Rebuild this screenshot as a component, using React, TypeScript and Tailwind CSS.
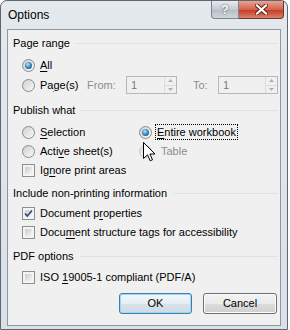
import React from "react";

function Radio({ checked = false }: { checked?: boolean }) {
  return (
    <span className="shrink-0 w-[13px] h-[13px] rounded-full border border-[#8b8b8b] bg-[linear-gradient(135deg,#cfcfcf,#f9f9f9)] flex items-center justify-center">
      {checked && (
        <span className="w-[7px] h-[7px] rounded-full bg-[radial-gradient(circle_at_40%_35%,#bfe9fb,#3d8cc4_45%,#0f4674)]" />
      )}
    </span>
  );
}

function Check({ checked = false }: { checked?: boolean }) {
  return (
    <span className="shrink-0 w-[13px] h-[13px] border border-[#8e8f8f] bg-[#f4f4f4] p-[2px] relative">
      <span className="block w-full h-full bg-[linear-gradient(135deg,#cbcbcb,#f7f7f7)]" />
      {checked && (
        <svg className="absolute left-0 top-0" width="11" height="11" viewBox="0 0 11 11">
          <path d="M2 5.5 L4.3 8 L9 2.5" fill="none" stroke="#34487f" strokeWidth="1.7" />
        </svg>
      )}
    </span>
  );
}

function Spin({ w }: { w: string }) {
  return (
    <div className={`${w} h-[18px] border border-[#b5b8bb] bg-[#f0f0f0] flex`}>
      <div className="flex-1 pl-[4px] text-[#7a7a7a] leading-[16px]">1</div>
      <div className="w-[12px] border-l border-[#dcdcdc] flex flex-col">
        <div className="flex-1 border-b border-[#dcdcdc] flex items-center justify-center">
          <svg width="5" height="3" viewBox="0 0 5 3"><path d="M0 3 L2.5 0 L5 3Z" fill="#b0b0b0" /></svg>
        </div>
        <div className="flex-1 flex items-center justify-center">
          <svg width="5" height="3" viewBox="0 0 5 3"><path d="M0 0 L2.5 3 L5 0Z" fill="#b0b0b0" /></svg>
        </div>
      </div>
    </div>
  );
}

function Header({ text, h }: { text: string; h: string }) {
  return (
    <div className={`${h} flex items-center pl-[5px] pr-[2px]`}>
      <span className="pr-[6px]">{text}</span>
      <span className="flex-1 h-px bg-[#dde2e6]" />
    </div>
  );
}

function U({ children }: { children: React.ReactNode }) {
  return <span className="underline underline-offset-2">{children}</span>;
}

export default function App() {
  return (
    <div className="w-[290px] h-[330px] bg-white font-['Liberation_Sans',Arial,sans-serif] text-[11px] text-black">
      <div className="w-[288px] h-[330px] rounded-t-[7px] border border-[#5e6670] bg-[linear-gradient(180deg,#e4e9ee,#d9e0e7)] flex flex-col">
        {/* title bar */}
        <div className="h-[28px] flex items-start">
          <div className="pl-[7px] pt-[6px] text-[12px] leading-[16px]">Options</div>
          <div className="ml-auto mr-[3px] flex">
            <div className="w-[28px] h-[18px] rounded-bl-[4px] border border-t-0 border-[#7b8590] bg-[linear-gradient(180deg,#e9ecef,#c3c9cf_50%,#b4bcc4_51%,#d0d6dc)] flex items-center justify-center text-[12px] font-bold text-white [text-shadow:0_0_2px_#333]">
              ?
            </div>
            <div className="w-[45px] h-[18px] rounded-br-[4px] border border-t-0 border-l-0 border-[#6d3530] bg-[linear-gradient(180deg,#e8a493,#d4624d_50%,#c4371f_51%,#d9826c)] flex items-center justify-center">
              <svg width="13" height="11" viewBox="0 0 13 11">
                <path d="M2 1.5 L11 9.5 M11 1.5 L2 9.5" stroke="#5b1c12" strokeWidth="4" strokeLinecap="square" />
                <path d="M2 1.5 L11 9.5 M11 1.5 L2 9.5" stroke="#ffffff" strokeWidth="2.2" strokeLinecap="square" />
              </svg>
            </div>
          </div>
        </div>
        {/* client */}
        <div className="mx-[6px] h-[297px] border border-[#8d98a3] bg-[#f0f0f0] relative flex flex-col">
          <Header text="Page range" h="h-[26px]" />
          <div className="h-[18px] flex items-center pl-[14px] gap-[5px]">
            <Radio checked />
            <span><U>A</U>ll</span>
          </div>
          <div className="h-[22px] flex items-center pl-[14px]">
            <div className="w-[65px] flex items-center gap-[5px]">
              <Radio />
              <span>Pa<U>g</U>e(s)</span>
            </div>
            <span className="w-[39px] text-[#8d8d8d]">From:</span>
            <Spin w="w-[51px]" />
            <span className="ml-[16px] w-[25px] text-[#8d8d8d]">To:</span>
            <Spin w="w-[60px]" />
          </div>
          <Header text="Publish what" h="h-[28px]" />
          <div className="h-[16px] flex items-center pl-[14px]">
            <div className="w-[117px] flex items-center gap-[5px]">
              <Radio />
              <span><U>S</U>election</span>
            </div>
            <div className="flex items-center gap-[3px]">
              <Radio checked />
              <span className="border border-dotted border-black px-[1px] leading-[14px]"><U>E</U>ntire workbook</span>
            </div>
          </div>
          <div className="h-[22px] flex items-center pl-[14px]">
            <div className="w-[117px] flex items-center gap-[5px]">
              <Radio />
              <span>Acti<U>v</U>e sheet(s)</span>
            </div>
            <div className="flex items-center gap-[9px] text-[#8d8d8d]">
              <span className="opacity-40"><Radio /></span>
              <span>Table</span>
            </div>
          </div>
          <div className="h-[16px] flex items-center pl-[14px] gap-[5px]">
            <Check />
            <span>Ig<U>n</U>ore print areas</span>
          </div>
          <Header text="Include non-printing information" h="h-[30px]" />
          <div className="h-[10px] flex items-center pl-[14px] gap-[5px]">
            <Check checked />
            <span>Document p<U>r</U>operties</span>
          </div>
          <div className="h-[28px] flex items-center pl-[14px] gap-[5px]">
            <Check />
            <span>Docu<U>m</U>ent structure tags for accessibility</span>
          </div>
          <Header text="PDF options" h="h-[20px]" />
          <div className="h-[22px] flex items-center pl-[14px] gap-[5px]">
            <Check />
            <span>ISO <U>1</U>9005-1 compliant (PDF/A)</span>
          </div>
          <div className="pt-[5px] flex pl-[111px] gap-[11px]">
            <div className="w-[73px] h-[21px] rounded-[3px] border border-[#3c7fb1] shadow-[inset_0_0_0_1px_#9fd6f5] bg-[linear-gradient(180deg,#f2f7fa,#e6eef3_50%,#d7e3ea_51%,#cddbe4)] flex items-center justify-center">
              OK
            </div>
            <div className="w-[74px] h-[21px] rounded-[3px] border border-[#707070] shadow-[inset_0_0_0_1px_#fbfbfb] bg-[linear-gradient(180deg,#f2f2f2,#ebebeb_50%,#dddddd_51%,#cfcfcf)] flex items-center justify-center">
              Cancel
            </div>
          </div>
          {/* mouse cursor */}
          <svg className="absolute left-[135px] top-[112px]" width="13" height="20" viewBox="0 0 13 20">
            <path d="M0.5 0.5 L0.5 16.5 L4.5 12.8 L7.2 18.8 L9.5 17.8 L6.9 12 L12 12 Z" fill="#ffffff" stroke="#000000" strokeWidth="1" strokeLinejoin="miter" />
          </svg>
        </div>
      </div>
    </div>
  );
}
